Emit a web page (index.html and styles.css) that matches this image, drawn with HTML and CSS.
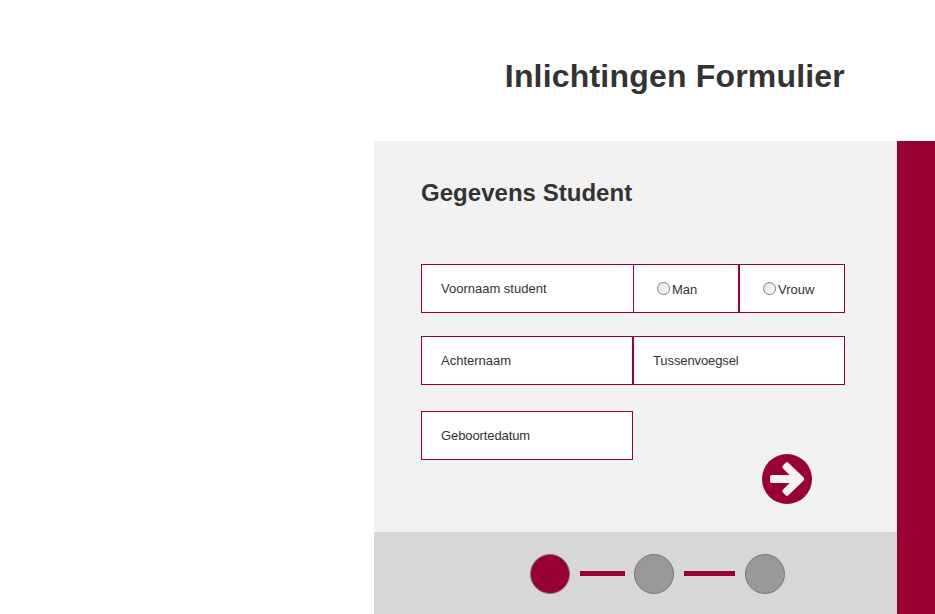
FILE: index.html
```html
<!DOCTYPE html>
<html lang="nl">
<head>
<meta charset="utf-8">
<title>Inlichtingen Formulier</title>
<link rel="stylesheet" href="styles.css">
</head>
<body>
<h1 class="title">Inlichtingen Formulier</h1>
<div class="page">
  <div class="panel">
    <form class="form">
      <h2 class="heading">Gegevens Student</h2>
      <div class="row">
        <label class="field name">Voornaam student</label>
        <label class="field choice first"><span class="radio"></span>Man</label>
        <label class="field choice"><span class="radio"></span>Vrouw</label>
      </div>
      <div class="row">
        <label class="field">Achternaam</label>
        <label class="field infix">Tussenvoegsel</label>
      </div>
      <div class="row last">
        <label class="field birth">Geboortedatum</label>
      </div>
      <svg class="next" viewBox="0 0 50 50"><circle cx="25" cy="25" r="25" fill="#990033"/><path d="M23.600 8.800a2 2 0 0 1 2.800 0L41.700 23.600a2 2 0 0 1 0 2.800L26.400 41.200a2 2 0 0 1-2.800 0l-2.700-2.700a2 2 0 0 1 0-2.800L27.600 29H10a2 2 0 0 1-2-2v-4a2 2 0 0 1 2-2h17.600l-6.700-6.700a2 2 0 0 1 0-2.800z" fill="#f2f2f2"/></svg>
    </form>
    <div class="steps">
      <span class="dot active"></span><span class="line"></span><span class="dot"></span><span class="line long"></span><span class="dot"></span>
    </div>
  </div>
  <div class="side"></div>
</div>
</body>
</html>
```
FILE: styles.css
```css
* { box-sizing: border-box; }
body { margin: 0; height: 614px; overflow: hidden; background: #fff; color: #333; font: 13px "Liberation Sans", Arial, sans-serif; }
.title { margin: 0; height: 141px; padding: 57px 90px 0 0; text-align: right; font-size: 32px; line-height: 38px; letter-spacing: 0.19px; }
.page { display: flex; margin-left: 374px; height: 473px; }
.panel { width: 523px; display: flex; flex-direction: column; }
.side { flex: 1; background: #990033; }
.form { height: 391px; padding: 38px 52px 0 47px; background: #f2f2f2; display: flex; flex-direction: column; }
.heading { margin: 0 0 57px; font-size: 24px; line-height: 28px; letter-spacing: 0.03px; }
.row { display: flex; margin-bottom: 23px; }
.row.last { margin-top: 3px; margin-bottom: 0; }
.field { width: 212px; height: 49px; padding-left: 19px; display: flex; align-items: center; background: #fff; border: 1px solid #990033; }
.name { width: 213px; }
.infix, .birth { letter-spacing: -0.1px; }
.choice { width: 106px; padding: 1px 0 0 23px; }
.choice.first { width: 105px; border-left: 0; }
.radio { width: 13px; height: 13px; margin: -2px 2px 0 0; border: 1px solid #808080; border-radius: 50%; background: linear-gradient(135deg, #e4e4e4, #fcfcfc); }
.next { width: 50px; height: 50px; margin: -6px 33px 0 0; align-self: flex-end; }
.steps { height: 82px; padding: 2px 0 0 156px; background: #d7d7d7; display: flex; align-items: center; }
.dot { width: 40px; height: 40px; border: 1px solid #777; border-radius: 50%; background: #999; }
.dot.active { background: #990033; }
.line { width: 45px; height: 5px; margin: -1px 9px 0 10px; background: #990033; }
.line.long { width: 51px; margin-right: 10px; }
```
